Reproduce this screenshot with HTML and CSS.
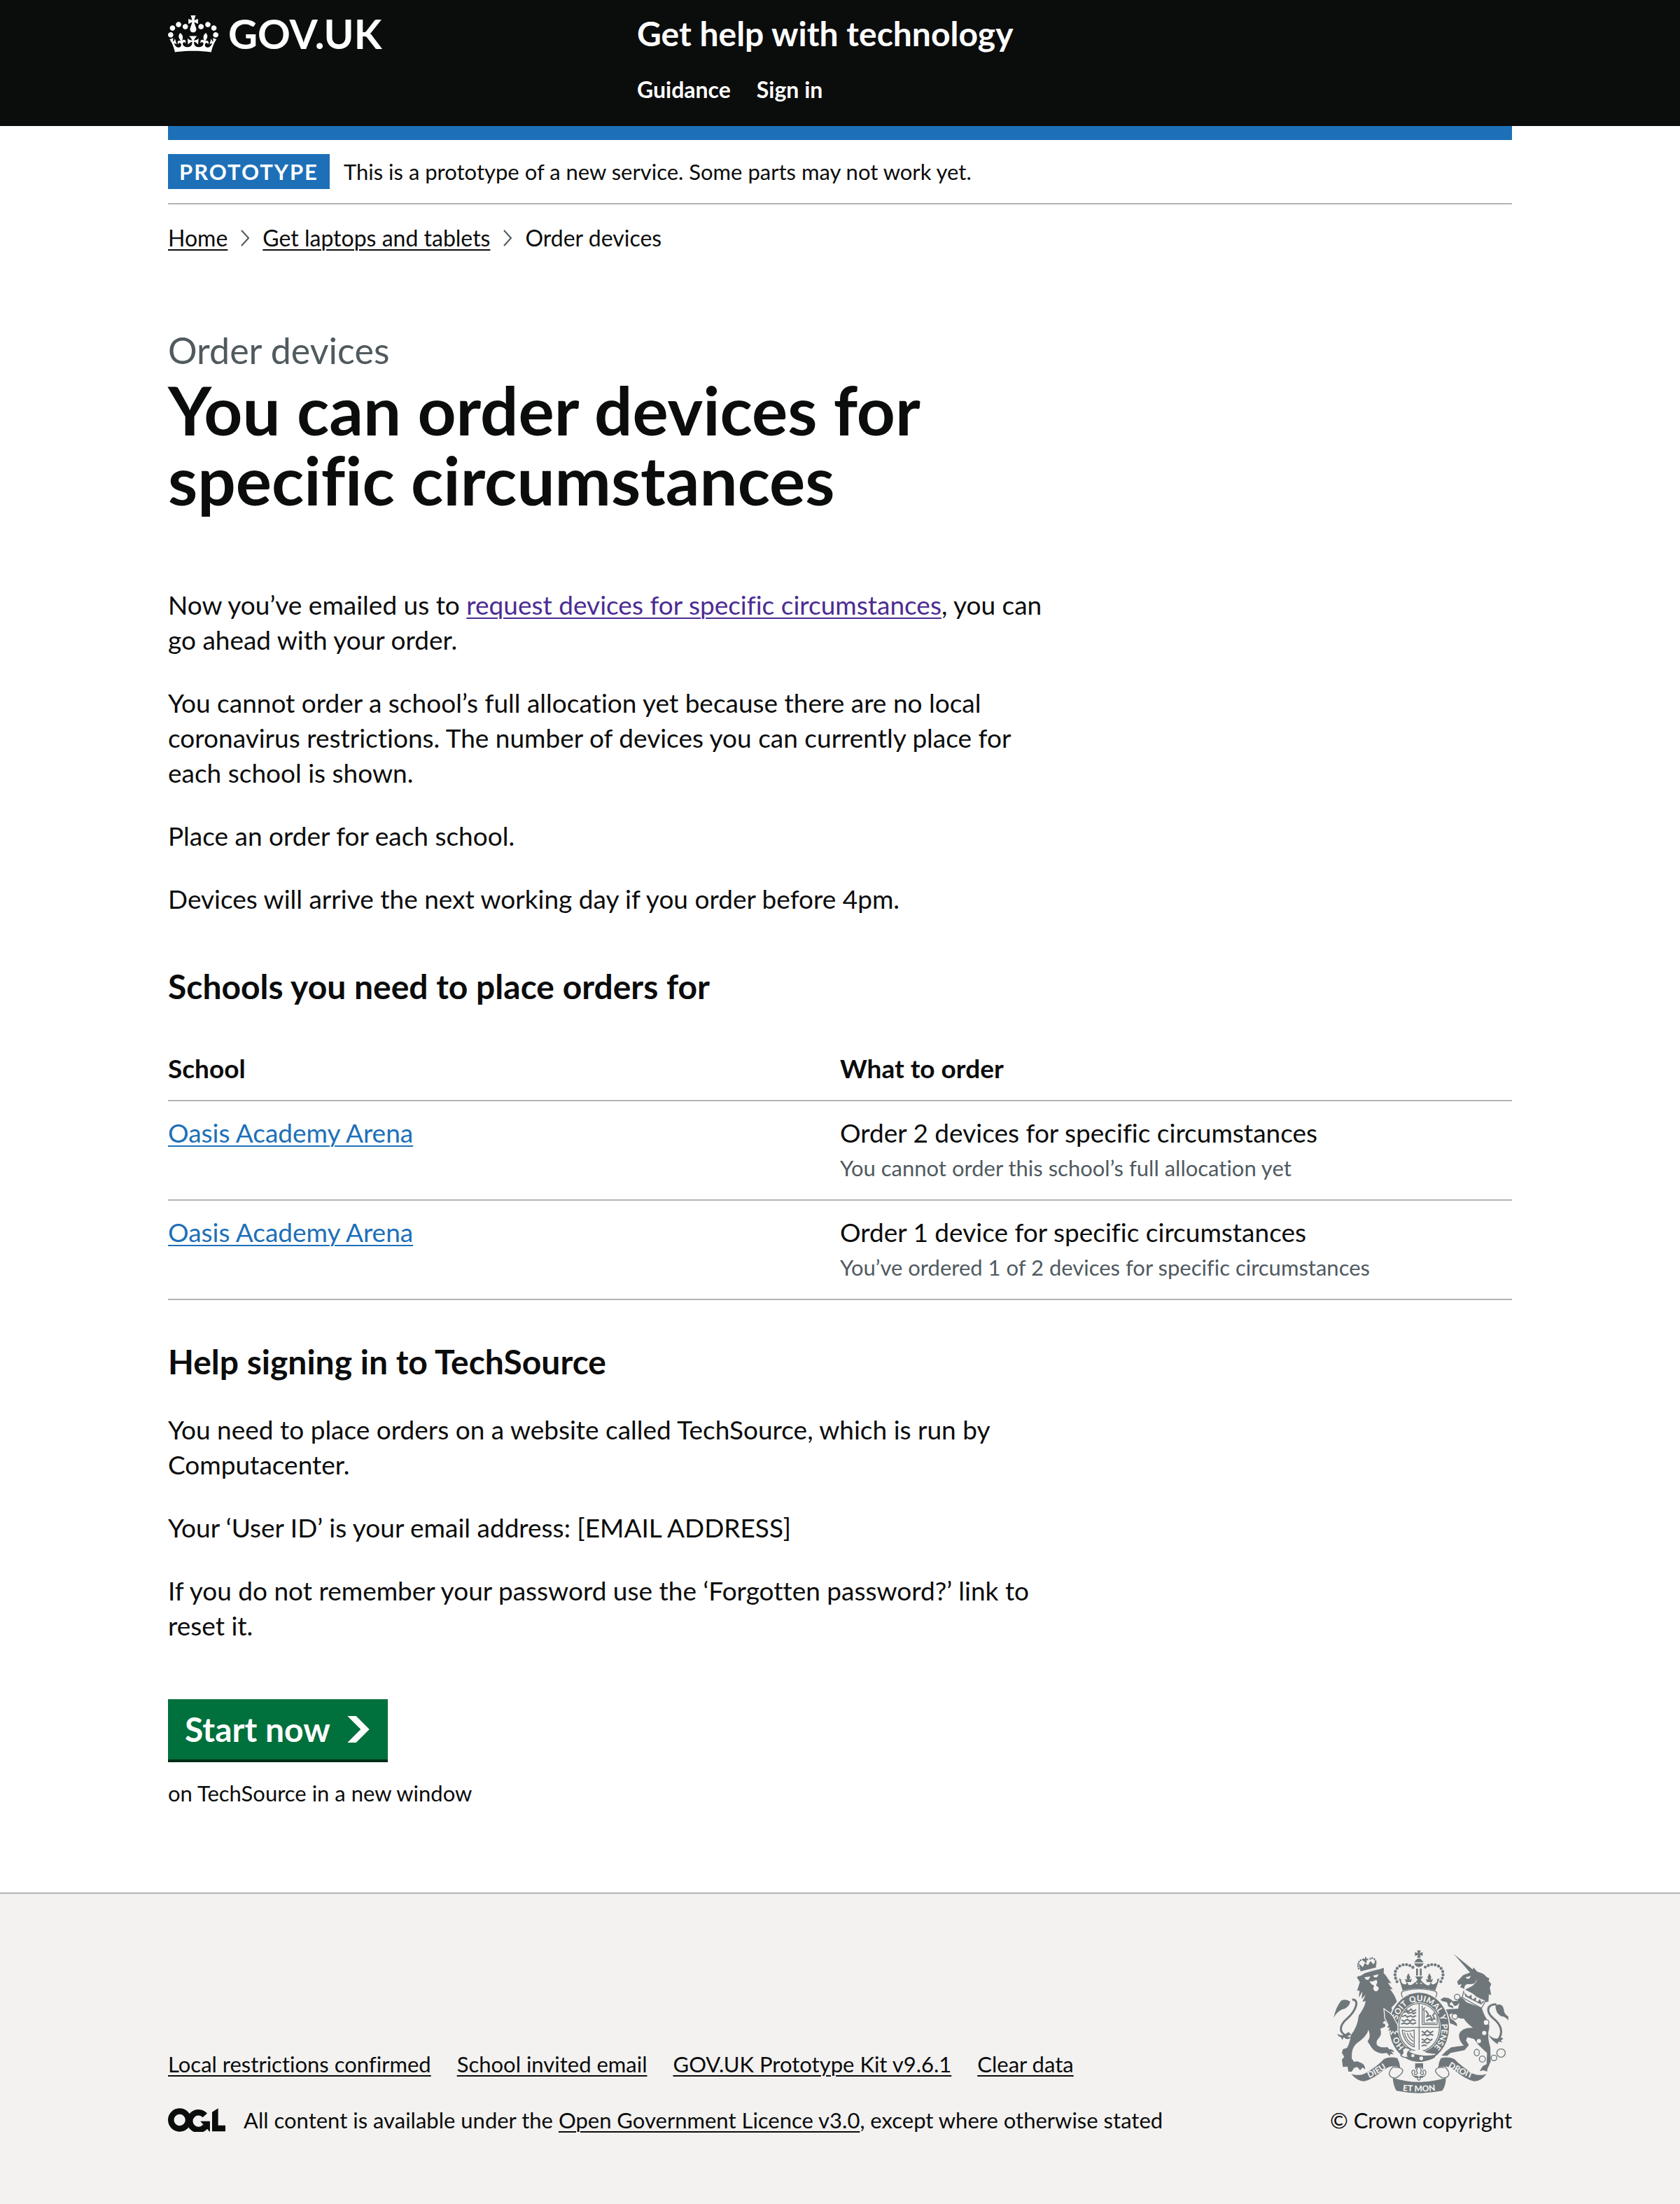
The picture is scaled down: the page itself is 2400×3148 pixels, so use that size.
FILE: index.html
```
<!DOCTYPE html>
<html lang="en">
<head>
<meta charset="utf-8">
<meta name="viewport" content="width=device-width, initial-scale=1">
<title>You can order devices for specific circumstances - Get help with technology</title>
<link rel="stylesheet" href="styles.css">
</head>
<body>
<header class="header">
  <div class="container header-inner">
    <a class="logo" href="#">
      <svg class="logo-crown" viewBox="0 0 132 97" aria-hidden="true"><path fill="currentColor" fill-rule="evenodd" d="M25 30.2c3.5 1.5 7.7-.2 9.1-3.7 1.5-3.6-.2-7.8-3.9-9.2-3.6-1.4-7.6.3-9.1 3.9-1.4 3.5.3 7.5 3.9 9zM9 39.5c3.6 1.5 7.8-.2 9.2-3.7 1.5-3.6-.2-7.8-3.9-9.1-3.6-1.5-7.6.2-9.1 3.8-1.4 3.5.3 7.5 3.8 9zM4.4 57.2c3.5 1.5 7.7-.2 9.1-3.8 1.5-3.6-.2-7.7-3.9-9.1-3.5-1.5-7.6.3-9.1 3.8-1.4 3.5.3 7.6 3.9 9.1zm38.3-21.4c3.5 1.5 7.7-.2 9.1-3.8 1.5-3.6-.2-7.7-3.9-9.1-3.6-1.5-7.6.3-9.1 3.8-1.3 3.6.4 7.7 3.9 9.1zm64.4-5.6c-3.6 1.5-7.8-.2-9.1-3.7-1.5-3.6.2-7.8 3.8-9.2 3.6-1.4 7.7.3 9.2 3.9 1.3 3.5-.4 7.5-3.9 9zm15.9 9.3c-3.6 1.5-7.7-.2-9.1-3.7-1.5-3.6.2-7.8 3.7-9.1 3.6-1.5 7.7.2 9.2 3.8 1.5 3.5-.3 7.5-3.8 9zm4.7 17.7c-3.6 1.5-7.8-.2-9.2-3.8-1.5-3.6.2-7.7 3.9-9.1 3.6-1.5 7.7.3 9.2 3.8 1.3 3.5-.4 7.6-3.9 9.1zM89.3 35.8c-3.6 1.5-7.8-.2-9.2-3.8-1.4-3.6.2-7.7 3.9-9.1 3.6-1.5 7.7.3 9.2 3.8 1.4 3.6-.3 7.7-3.9 9.1zM69.7 17.7l8.9 4.7V9.3l-8.9 2.8c-.2-.3-.5-.6-.9-.9L72.4 0H59.6l3.5 11.2c-.3.3-.6.5-.9.9l-8.8-2.8v13.1l8.8-4.7c.3.3.6.7.9.9l-5 15.4v.1c-.2.8-.4 1.6-.4 2.4 0 4.1 3.1 7.5 7 8.1h.2c.3 0 .7.1 1 .1.4 0 .7 0 1-.1h.2c4-.6 7.1-4.1 7.1-8.1 0-.8-.1-1.7-.4-2.4V34l-5.1-15.4c.4-.2.7-.6 1-.9zM66 92.8c16.9 0 32.8 1.1 47.1 3.2 4-16.9 8.9-26.7 14-33.5l-9.6-3.4c1 4.9 1.1 7.2 0 10.2-1.5-1.4-3-4.3-4.2-8.7L108.6 76c2.8-2 5-3.2 7.5-3.3-4.4 9.4-10 11.9-13.6 11.2-4.3-.8-6.3-4.6-5.6-7.9 1-4.7 5.7-5.9 8-.5 4.3-8.7-3-11.4-7.6-8.8 7.1-7.2 7.9-13.5 2.1-21.1-8 6.1-8.1 12.3-4.5 20.8-4.7-5.4-12.1-2.5-9.5 6.2 3.4-5.2 7.9-2 7.2 3.1-.6 4.3-6.4 7.8-13.5 7.2-10.3-.9-10.9-8-11.2-13.8 2.5-.5 7.1 1.8 11 7.3L80.2 60c-4.1 4.4-8 5.3-12.3 5.4 1.4-4.4 8-11.6 8-11.6H55.5s6.4 7.2 7.9 11.6c-4.2-.1-8-1-12.3-5.4l1.4 16.4c3.9-5.5 8.5-7.7 10.9-7.3-.3 5.8-.9 12.8-11.1 13.8-7.2.6-12.9-2.9-13.5-7.2-.7-5 3.8-8.3 7.1-3.1 2.7-8.7-4.6-11.6-9.4-6.2 3.7-8.5 3.6-14.7-4.6-20.8-5.8 7.6-5 13.9 2.2 21.1-4.7-2.6-11.9.1-7.7 8.8 2.3-5.5 7.1-4.2 8.1.5.7 3.3-1.3 7.1-5.7 7.9-3.5.7-9-1.8-13.5-11.2 2.5.1 4.7 1.3 7.5 3.3l-4.7-15.4c-1.2 4.4-2.7 7.2-4.3 8.7-1.1-3-.9-5.3 0-10.2l-9.5 3.4c5 6.9 9.9 16.7 14 33.5 14.8-2.1 30.8-3.2 47.7-3.2z"/></svg>
      <span>GOV.UK</span>
    </a>
    <div class="header-content">
      <a class="service-name" href="#">Get help with technology</a>
      <nav class="header-nav" aria-label="Menu">
        <a href="#">Guidance</a>
        <a href="#">Sign in</a>
      </nav>
    </div>
  </div>
</header>

<div class="container page">
  <div class="phase-banner">
    <strong class="tag">PROTOTYPE</strong>
    <span>This is a prototype of a new service. Some parts may not work yet.</span>
  </div>

  <nav aria-label="Breadcrumb">
    <ol class="breadcrumbs">
      <li><a href="#">Home</a></li>
      <li><svg viewBox="0 0 12 24" aria-hidden="true"><path d="M1 1l10 11L1 23"/></svg><a href="#">Get laptops and tablets</a></li>
      <li><svg viewBox="0 0 12 24" aria-hidden="true"><path d="M1 1l10 11L1 23"/></svg>Order devices</li>
    </ol>
  </nav>

  <main class="main">
    <div class="two-thirds">
      <p class="caption">Order devices</p>
      <h1>You can order devices for specific circumstances</h1>
      <p>Now you’ve emailed us to <a class="visited" href="#">request devices for specific circumstances</a>, you can go ahead with your order.</p>
      <p>You cannot order a school’s full allocation yet because there are no local coronavirus restrictions. The number of devices you can currently place for each school is shown.</p>
      <p>Place an order for each school.</p>
      <p>Devices will arrive the next working day if you order before 4pm.</p>
      <h2>Schools you need to place orders for</h2>
    </div>

    <table class="table">
      <thead>
        <tr><th scope="col">School</th><th scope="col">What to order</th></tr>
      </thead>
      <tbody>
        <tr>
          <td><a href="#">Oasis Academy Arena</a></td>
          <td>Order 2 devices for specific circumstances<span class="hint">You cannot order this school’s full allocation yet</span></td>
        </tr>
        <tr>
          <td><a href="#">Oasis Academy Arena</a></td>
          <td>Order 1 device for specific circumstances<span class="hint">You’ve ordered 1 of 2 devices for specific circumstances</span></td>
        </tr>
      </tbody>
    </table>

    <div class="two-thirds">
      <h2>Help signing in to TechSource</h2>
      <p>You need to place orders on a website called TechSource, which is run by Computacenter.</p>
      <p>Your ‘User ID’ is your email address: [EMAIL ADDRESS]</p>
      <p>If you do not remember your password use the ‘Forgotten password?’ link to reset it.</p>
      <button class="start" type="button">Start now
        <svg viewBox="0 0 33 40" aria-hidden="true"><path fill="currentColor" d="M0 0h13l20 20-20 20H0l20-20z"/></svg>
      </button>
      <p class="small">on TechSource in a new window</p>
    </div>
  </main>
</div>

<footer class="footer">
  <div class="container footer-inner">
    <div class="footer-meta">
      <ul class="footer-links">
        <li><a href="#">Local restrictions confirmed</a></li>
        <li><a href="#">School invited email</a></li>
        <li><a href="#">GOV.UK Prototype Kit v9.6.1</a></li>
        <li><a href="#">Clear data</a></li>
      </ul>
      <div class="licence">
        <svg class="ogl" viewBox="0 0 483 196" role="img" aria-label="Open Government Licence">
          <g fill="none" stroke="currentColor" stroke-width="50">
            <circle cx="98" cy="98" r="73"/>
            <path d="M311 59A73 73 0 1 0 315 152"/>
          </g>
          <path fill="currentColor" d="M272 108h81v88h-3zM371 32L422 0v143h61v51H371z"/>
        </svg>
        <span>All content is available under the <a href="#">Open Government Licence v3.0</a>, except where otherwise stated</span>
      </div>
    </div>
    <a class="copyright" href="#">
      <svg class="arms" viewBox="102 70 750 615" aria-hidden="true">
        <defs>
          <path id="garter" d="M469 514A97 112 0 0 1 469 290A97 112 0 0 1 469 514"/>
          <path id="left-scroll" d="M236 628Q296 604 352 558"/>
          <path id="mid-scroll" d="M378 671Q468 684 560 670"/>
          <path id="right-scroll" d="M576 560Q640 604 712 628"/>
        </defs>
        <!-- lion -->
        <g class="ink">
          <path d="M220 180Q260 153 300 152L318 147L317 170Q330 182 337 196L350 213L336 211Q342 224 356 239L344 238Q364 262 374 292L350 318Q361 340 372 368Q377 390 378 424L370 418L366 430L357 420L349 432L346 417L333 420L340 405L328 406L336 392L325 376L308 365L300 376L290 368L272 382Q290 360 314 366L322 372L312 384Q330 388 322 400L302 408Q312 430 296 448Q280 465 290 480Q310 492 332 486L342 496Q356 494 362 508L348 506L360 518L345 516L344 526L330 512L310 514Q280 510 266 490L248 462Q264 444 252 412Q246 440 200 472Q178 492 180 535L190 550Q204 544 215 552Q236 556 238 582L226 574L216 586L204 572L190 576L180 592L166 592L162 570L142 572L138 540L148 528L138 512L142 496L160 490Q172 470 176 436Q205 400 210 352Q236 316 240 290L226 292L240 262L222 280L226 248L210 275L214 245L203 245L215 208L202 188L206 184Z"/>
          <path d="M210 128l8 34 66-16 0-34-10 20-14-14-10 18-14-10-8 18z"/>
          <path d="M229 106l7 3 2-8 5 0 1 7 7 0-1 6-7 1 2 10-7 1-2-9-7 1z"/>
          <path d="M103 361Q110 320 134 288Q156 278 174 292Q168 320 138 326Q116 336 103 361ZM118 430Q135 440 150 434L166 422L178 434L160 440L176 446Q160 460 146 444L140 456L134 444Q122 442 118 430Z"/>
        </g>
        <g class="line thick"><path d="M160 438C120 425 130 390 160 365C200 330 215 282 182 283"/></g>
        <g class="beads"><path d="M210 150Q200 125 222 112Q232 108 238 122M280 138Q290 118 272 106Q258 102 256 118"/></g>
        <g class="paper">
          <path d="M234 188l26-4-8 14h-10zM272 180l24-6-8 14h-12z"/>
          <path d="M256 204l12 2 18-8 4 10-6 16q12 4 12 12-4 12-12 12t-12-12l4-12-12-8z"/>
          <path d="M212 176L308 150L310 146L214 172Z"/>
        </g>
        <!-- unicorn -->
        <g class="ink">
          <path d="M617 87L706 160L688 168Z"/>
          <path d="M632 206L658 178L696 164L702 145L718 164Q746 170 758 186L770 192L767 203L778 216L772 232L778 264L768 260L766 292L752 294Q720 276 700 258L666 240L690 228Q712 218 717 196L706 214Q690 218 674 216L664 225L662 238L652 232L644 230L652 218L636 220Z"/>
          <path d="M650 270L672 294L738 320Q744 345 762 372Q775 395 766 420Q762 450 774 488L776 548L762 580L760 592L745 586L728 590L742 568L758 560L760 512Q740 494 724 478L704 452L676 444L670 458L682 478L664 500Q625 508 604 512L590 524L565 524L584 504L606 488Q640 482 660 480Q638 458 640 432Q652 402 700 404Q674 386 660 364Q640 368 618 350L608 342L598 348L606 366Q618 370 630 386L632 398L612 388L602 386L588 352L582 338L572 326L602 324L636 322L642 296Q632 312 620 310L608 292L598 304L616 312L614 320L594 312L588 294L568 290L560 284L574 274L594 276Q606 282 614 290L634 288Z"/>
          <path d="M796 308Q826 294 832 326Q832 344 851 356L851 374Q840 354 820 354Q796 342 796 308ZM764 430Q790 460 822 446L830 450L818 460L828 466L808 464L806 474Q780 460 764 430Z"/>
        </g>
        <g class="line thick"><path d="M806 458C836 420 815 385 785 362C755 335 758 303 800 303"/></g>
        <g class="paper">
          <path d="M662 246L752 288L736 320L652 276Z"/>
          <path d="M668 188l22-6-6 12h-10z"/>
          <circle cx="748" cy="426" r="9"/><circle cx="725" cy="461" r="9"/><circle cx="756" cy="381" r="12"/>
          <circle cx="622" cy="355" r="12"/>
        </g>
        <g class="ink"><path d="M660 250l8 20 66 34 16-14-10 0-4 8-6-18-10 12-8-4 2-16-14 10-6-6 0-14-14 8z"/></g>
        <g class="line">
          <circle cx="632" cy="272" r="12"/><circle cx="622" cy="355" r="12"/><circle cx="756" cy="381" r="12"/>
          <ellipse cx="716" cy="510" rx="11" ry="14"/><circle cx="740" cy="538" r="13"/><circle cx="790" cy="533" r="12"/><circle cx="820" cy="512" r="18"/>
          <path d="M660 246L654 274L736 320L752 292"/>
        </g>
        <!-- garter and shield -->
        <ellipse class="paper" cx="469" cy="402" rx="133" ry="153"/>
        <ellipse class="ink" cx="469" cy="402" rx="128" ry="148"/>
        <ellipse class="paper" cx="469" cy="402" rx="92" ry="107"/>
        <g class="garter-text">
          <text><textPath href="#garter" startOffset="15%">HO</textPath></text>
          <text><textPath href="#garter" startOffset="36%">SOIT</textPath></text>
          <text><textPath href="#garter" startOffset="49%">QUI</textPath></text>
          <text><textPath href="#garter" startOffset="60%">MAL</textPath></text>
          <text><textPath href="#garter" startOffset="69%">Y</textPath></text>
          <text><textPath href="#garter" startOffset="81%">PENSE</textPath></text>
        </g>
        <g class="line">
          <ellipse cx="469" cy="402" rx="87" ry="102"/>
          <path d="M469 300V504M382 402H556"/>
          <path d="M482 310V390H546V350M488 328Q486 320 496 318M540 384H490V320"/>
          <path d="M396 414Q420 424 448 414V486Q404 470 396 414M406 424Q412 460 444 476M418 426Q424 450 444 462M430 426Q434 440 444 448"/>
        </g>
        <g class="line heavy">
          <path d="M412 326l12 8 10-10 10 10 12-8M404 338l12-4 6 8 16-4 6 6 12-6M396 356l14-6 8 8 14-6 10 6 14-6M394 370l10 6 14-8 12 8 12-8 12 6M392 388l12-4 14 4 12-6 12 6 14-6"/>
          <path d="M496 330l12 14-6 12 14-4 8 14 12 0-8-16 8-10M500 374l14-8 14 10"/>
          <path d="M480 418l12 8 12-10 12 10 14-8M480 436l14-4 10 6 14-6 12 4M480 452l12 6 12-8 14 8 8-6M480 468l12-4 12 6 12-6M480 482l10-4 12 2"/>
        </g>
        <path class="ink" d="M404 502Q470 530 540 516L536 532Q480 562 412 530Z"/>
        <path class="paper" d="M412 498Q450 508 456 498L482 498Q490 514 540 516L536 520Q470 530 424 506Z"/>
        <path class="buckle" d="M398 500Q406 482 428 494Q436 500 422 506Q414 520 424 528Q402 536 390 522Q404 516 398 500Z"/>
        <g class="paper"><circle cx="442" cy="523" r="7"/><circle cx="478" cy="535" r="8"/></g>
        <path class="forearm" d="M318 322L346 342Q358 352 364 368L378 392L378 424L370 418L366 430L357 420L349 432L346 417L333 420L340 405L328 406L336 392Q330 376 322 364Z"/>
        <!-- crown above the shield -->
        <path class="paper" d="M392 222H545L546 262Q470 240 390 266Z"/>
        <g class="ink">
          <path d="M460 72h16l-4 12 12-4v16l-12-4 4 12h-16l4-12-13 4v-16l13 4zM448 123Q468 92 488 123ZM448 128H488Q484 142 468 144Q452 142 448 128ZM456 150h8v30h-8zM472 150h8v30h-8z"/>
          <path d="M382 192L392 222L398 244Q468 226 538 244L546 222L556 192L546 196Q548 212 534 216Q520 222 520 206L512 222Q500 224 484 208L478 218L468 208L458 218L452 208Q438 224 424 220L416 206Q416 222 402 216Q390 212 392 196Z"/>
          <path d="M452 184h34l-10 14 10 14h-34l10-14zM423 170l8 16-3 12 10-4-4 14h-22l-4-14 10 4-3-12zM513 170l8 16-3 12 10-4-4 14h-22l-4-14 10 4-3-12z"/>
        </g>
        <g class="beads big"><path d="M374 206Q352 160 388 138Q420 124 448 150M562 206Q586 160 550 138Q516 124 488 150"/></g>
        <g class="line"><path d="M398 274Q386 250 404 246Q468 228 534 246Q552 250 540 274"/></g>
        <!-- scrolls -->
        <g class="ink">
          <path d="M178 602Q210 612 236 600Q290 570 318 538Q344 526 376 534Q386 554 388 576Q352 558 318 584Q270 626 234 633Q204 634 178 602Z"/>
          <path d="M758 602Q728 612 700 600Q650 570 620 538Q594 526 562 534Q552 552 550 576Q584 560 618 584Q668 626 704 633Q734 634 758 602Z"/>
          <path d="M356 618Q468 654 584 618Q584 650 568 674Q468 694 372 674Q358 652 356 618Z"/>
          <path d="M452 556H486V584Q478 570 469 572Q460 570 452 584Z"/>
        </g>
        <g class="line">
          <path d="M362 568Q336 590 342 606Q350 622 372 618Q404 596 398 584Q392 572 362 574M576 568Q600 590 596 606Q588 622 566 618Q534 596 540 584Q546 572 576 574"/>
          <path d="M468 568Q452 586 462 598Q456 610 448 602Q456 584 442 586Q432 596 446 612L462 612L462 624Q468 634 474 624L474 612L490 612Q504 596 494 586Q480 584 488 602Q480 610 474 598Q484 586 468 568ZM450 616H486"/>
        </g>
        <g class="scroll-text">
          <text><textPath href="#left-scroll" startOffset="47%">DIEU</textPath></text>
          <text><textPath href="#mid-scroll" startOffset="50%">ET MON</textPath></text>
          <text><textPath href="#right-scroll" startOffset="50%">DROIT</textPath></text>
        </g>
      </svg>
      <span>© Crown copyright</span>
    </a>
  </div>
</footer>
</body>
</html>
```
FILE: styles.css
```
* { box-sizing: border-box; }

body {
  margin: 0;
  min-height: 100vh;
  display: flex;
  flex-direction: column;
  background: #fff;
  color: #0b0c0c;
  font-family: Lato, "Liberation Sans", sans-serif;
  font-size: 37px;
  font-variant-ligatures: none;
  line-height: 50px;
}

a {
  color: #1d70b8;
  text-decoration-thickness: 2px;
  text-underline-offset: 4px;
}

.container {
  width: calc(100% - 120px);
  max-width: 1920px;
  margin: 0 auto;
}

/* Header */
.header { background: #0b0c0c; color: #fff; }

.header a { color: #fff; font-weight: 700; text-decoration: none; }

.header-inner {
  display: grid;
  grid-template-columns: 670px 1fr;
  align-items: start;
  padding: 18px 0 32px;
}

.logo {
  display: flex;
  align-items: center;
  gap: 14px;
  font-size: 58px;
  line-height: 60px;
}

.logo-crown { width: 72px; height: 53px; }

.header-content { display: flex; flex-direction: column; gap: 30px; }

.service-name { font-size: 48px; line-height: 60px; }

.header-nav {
  display: flex;
  gap: 37px;
  font-size: 32px;
  line-height: 40px;
}

/* Phase banner and breadcrumbs */
.page { border-top: 20px solid #1d70b8; }

.phase-banner {
  display: flex;
  align-items: center;
  gap: 20px;
  padding: 20px 0;
  border-bottom: 2px solid #b1b4b6;
  font-size: 31px;
}

.tag {
  padding: 0 16px;
  background: #1d70b8;
  color: #fff;
  letter-spacing: 2px;
}

.breadcrumbs {
  display: flex;
  margin: 28px 0 0;
  padding: 0;
  list-style: none;
  font-size: 32px;
  line-height: 40px;
}

.breadcrumbs li { display: flex; align-items: center; }

.breadcrumbs a { color: inherit; }

.breadcrumbs svg {
  width: 12px;
  height: 24px;
  margin: 0 19px;
  fill: none;
  stroke: #505a5f;
  stroke-width: 2;
}

/* Content */
.main { padding: 105px 0 122px; }

.two-thirds { max-width: 1260px; }

p { margin: 0 0 40px; }

h1 {
  margin: 0 0 104px;
  font-size: 96px;
  line-height: 100px;
}

h2 {
  margin: 0 0 40px;
  padding-top: 28px;
  font-size: 48px;
  line-height: 64px;
}

.caption {
  margin: 0;
  color: #505a5f;
  font-size: 52px;
  line-height: 70px;
}

.visited { color: #4c2c92; }

.small { margin: 0; font-size: 31px; line-height: 40px; }

.table {
  width: 100%;
  margin-bottom: 28px;
  border-collapse: separate;
  border-spacing: 0;
  table-layout: fixed;
  text-align: left;
}

th, td {
  padding: 20px 20px 20px 0;
  border-bottom: 2px solid #b1b4b6;
  vertical-align: top;
}

.hint { display: block; color: #505a5f; font-size: 31px; }

.start {
  display: flex;
  align-items: center;
  gap: 24px;
  margin: 80px 0 28px;
  padding: 16px 26px 16px 24px;
  border: 0;
  background: #00703c;
  box-shadow: 0 4px 0 #002d18;
  color: #fff;
  font-family: inherit;
  font-size: 48px;
  font-weight: 700;
  line-height: 54px;
}

.start svg { width: 32px; height: 38px; }

/* Footer */
.footer {
  flex: 1;
  padding: 80px 0 102px;
  border-top: 2px solid #b1b4b6;
  background: #f3f2f1;
  font-size: 31px;
  line-height: 40px;
}

.footer a { color: inherit; }

.footer-inner {
  display: flex;
  justify-content: space-between;
  align-items: flex-end;
}

.footer-meta { display: flex; flex-direction: column; gap: 40px; }

.footer-links {
  display: flex;
  gap: 37px;
  margin: 0;
  padding: 0;
  list-style: none;
}

.licence { display: flex; align-items: center; gap: 26px; }

.ogl { width: 82px; height: 34px; }

.copyright {
  display: flex;
  flex-direction: column;
  align-items: center;
  gap: 18px;
  text-decoration: none;
}

.arms { width: 250px; height: 205px; }

.arms .ink { fill: #6f777b; }
.arms .paper { fill: #f3f2f1; }
.arms .line { fill: none; stroke: #6f777b; stroke-width: 4; }
.arms .thick { stroke-width: 9; }
.arms .heavy { stroke-width: 6; }
.arms .buckle { fill: #f3f2f1; stroke: #6f777b; stroke-width: 4; }
.arms .forearm { fill: #6f777b; stroke: #f3f2f1; stroke-width: 4; }

.arms .beads {
  fill: none;
  stroke: #6f777b;
  stroke-width: 8;
  stroke-linecap: round;
  stroke-dasharray: 0 10;
}

.arms .big { stroke-width: 13; stroke-dasharray: 0 15; }

.garter-text, .scroll-text {
  fill: #f3f2f1;
  font-weight: 900;
  text-anchor: middle;
}

.garter-text { font-size: 35px; }
.scroll-text { font-size: 36px; }
```
